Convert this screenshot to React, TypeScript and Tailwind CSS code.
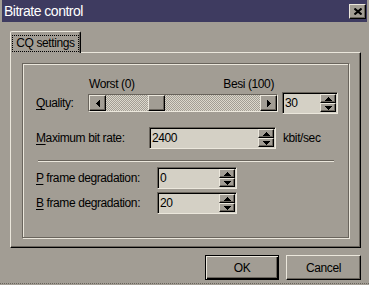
import type { ReactNode } from 'react';

// Classic 3D bevels, shared by every control in the dialog.
const raised =
  'border border-t-[#ebe7dc] border-l-[#ebe7dc] border-r-black border-b-black bg-[#a29d94] shadow-[inset_-1px_-1px_0_#69645c]';
const sunken =
  'border border-t-[#69645c] border-l-[#69645c] border-r-[#ebe7dc] border-b-[#ebe7dc] bg-[#d4d0c5] shadow-[inset_1px_1px_0_#000]';
const checker =
  'bg-[image:repeating-conic-gradient(#dcd8cc_0%_25%,#a29d94_0%_50%)] bg-[length:2px_2px]';

function Arrow({ dir }: { dir: 'left' | 'right' | 'up' | 'down' }) {
  const horizontal = dir === 'left' || dir === 'right';
  const points = {
    left: '4,0 4,7 0,3.5',
    right: '0,0 0,7 4,3.5',
    up: '3.5,0 7,4 0,4',
    down: '0,0 7,0 3.5,4',
  }[dir];
  return (
    <svg
      width={horizontal ? 4 : 7}
      height={horizontal ? 7 : 4}
      viewBox={horizontal ? '0 0 4 7' : '0 0 7 4'}
      shapeRendering="crispEdges"
    >
      <polygon points={points} fill="#000" />
    </svg>
  );
}

function Spin({ value, className }: { value: string; className: string }) {
  return (
    <div className={`flex h-[22px] ${className} ${sunken}`}>
      <span className="flex flex-1 items-center pl-[2px]">{value}</span>
      <div className="my-[1px] mr-[1px] flex w-[16px] flex-col">
        <div className={`flex h-[9px] items-center justify-center ${raised}`}>
          <Arrow dir="up" />
        </div>
        <div className={`flex h-[9px] items-center justify-center ${raised}`}>
          <Arrow dir="down" />
        </div>
      </div>
    </div>
  );
}

function Label({ hot, rest, className }: { hot: string; rest: string; className: string }) {
  return (
    <span className={`whitespace-nowrap ${className}`}>
      <span className="underline underline-offset-[2px]">{hot}</span>
      {rest}
    </span>
  );
}

function Row({ children, className }: { children: ReactNode; className: string }) {
  return <div className={`flex h-[22px] items-center pl-[13px] ${className}`}>{children}</div>;
}

export default function App() {
  return (
    <div className="h-[285px] w-[369px] overflow-hidden bg-[#a29d94] font-['Liberation_Sans',Arial,sans-serif] text-[12px] leading-[14px] tracking-[-0.4px] text-black">
      <div className="mx-[2px] flex h-[22px] items-start justify-between bg-[#3e3b60] pl-[2px] pr-[1px]">
        <span className="self-center text-[14px] tracking-[-0.5px] text-white">Bitrate control</span>
        <div className={`mt-[4px] flex h-[15px] w-[17px] items-center justify-center ${raised}`}>
          <svg width="8" height="7" viewBox="0 0 8 7">
            <path d="M0.5 0.5 L7.5 6.5 M7.5 0.5 L0.5 6.5" stroke="#000" strokeWidth="2" />
          </svg>
        </div>
      </div>

      <div className="ml-[10px] mt-[9px] w-[351px]">
        <div className="relative z-10 -mb-px flex h-[22px] w-[71px] items-start justify-center rounded-t-[2px] border-l border-r border-t border-l-[#ebe7dc] border-r-black border-t-[#ebe7dc] bg-[#a29d94] pt-[3px] shadow-[inset_-1px_0_0_#69645c]">
          <span className="whitespace-nowrap border border-dotted border-black px-[3px] pb-[1px]">CQ settings</span>
        </div>
        <div className="h-[196px] border border-b-black border-l-[#ebe7dc] border-r-black border-t-[#ebe7dc] px-[11px] pb-[9px] pt-[10px] shadow-[inset_-1px_-1px_0_#69645c]">
          <div className="h-full border border-[#69645c] shadow-[inset_1px_1px_0_#ebe7dc,1px_1px_0_#ebe7dc]">
            <div className="ml-[65px] mt-[13px] flex h-[15px] w-[190px] justify-between pl-[1px] pr-[4px]">
              <span>Worst (0)</span>
              <span>Besi (100)</span>
            </div>

            <Row className="">
              <Label hot="Q" rest="uality:" className="w-[52px]" />
              <div className="flex h-[18px] w-[190px] border border-b-[#ebe7dc] border-l-[#69645c] border-r-[#ebe7dc] border-t-[#69645c]">
                <div className={`flex w-[17px] items-center justify-center ${raised}`}>
                  <Arrow dir="left" />
                </div>
                <div className={`w-[42px] ${checker}`} />
                <div className={`w-[17px] ${raised}`} />
                <div className={`flex-1 ${checker}`} />
                <div className={`flex w-[17px] items-center justify-center ${raised}`}>
                  <Arrow dir="right" />
                </div>
              </div>
              <Spin value="30" className="ml-[4px] w-[56px]" />
            </Row>

            <Row className="mt-[13px]">
              <Label hot="M" rest="aximum bit rate:" className="w-[113px]" />
              <Spin value="2400" className="w-[127px]" />
              <span className="ml-[7px]">kbit/sec</span>
            </Row>

            <div className="ml-[15px] mt-[11px] h-[2px] w-[296px] border-b border-t border-b-[#ebe7dc] border-t-[#69645c]" />

            <Row className="mt-[5px]">
              <Label hot="P" rest=" frame degradation:" className="w-[121px]" />
              <Spin value="0" className="w-[80px]" />
            </Row>
            <Row className="mt-[3px]">
              <Label hot="B" rest=" frame degradation:" className="w-[121px]" />
              <Spin value="20" className="w-[80px]" />
            </Row>
          </div>
        </div>
      </div>

      <div className="mt-[7px] flex justify-end gap-[7px] pr-[8px]">
        <button className="flex h-[25px] w-[74px] items-center justify-center border border-black bg-[#a29d94] shadow-[inset_1px_1px_0_#ebe7dc,inset_-1px_-1px_0_#000,inset_-2px_-2px_0_#69645c]">
          OK
        </button>
        <button className={`flex h-[25px] w-[75px] items-center justify-center ${raised}`}>Cancel</button>
      </div>
      <div className="mt-[3px] h-px border-t border-dotted border-[#69645c]" />
    </div>
  );
}
